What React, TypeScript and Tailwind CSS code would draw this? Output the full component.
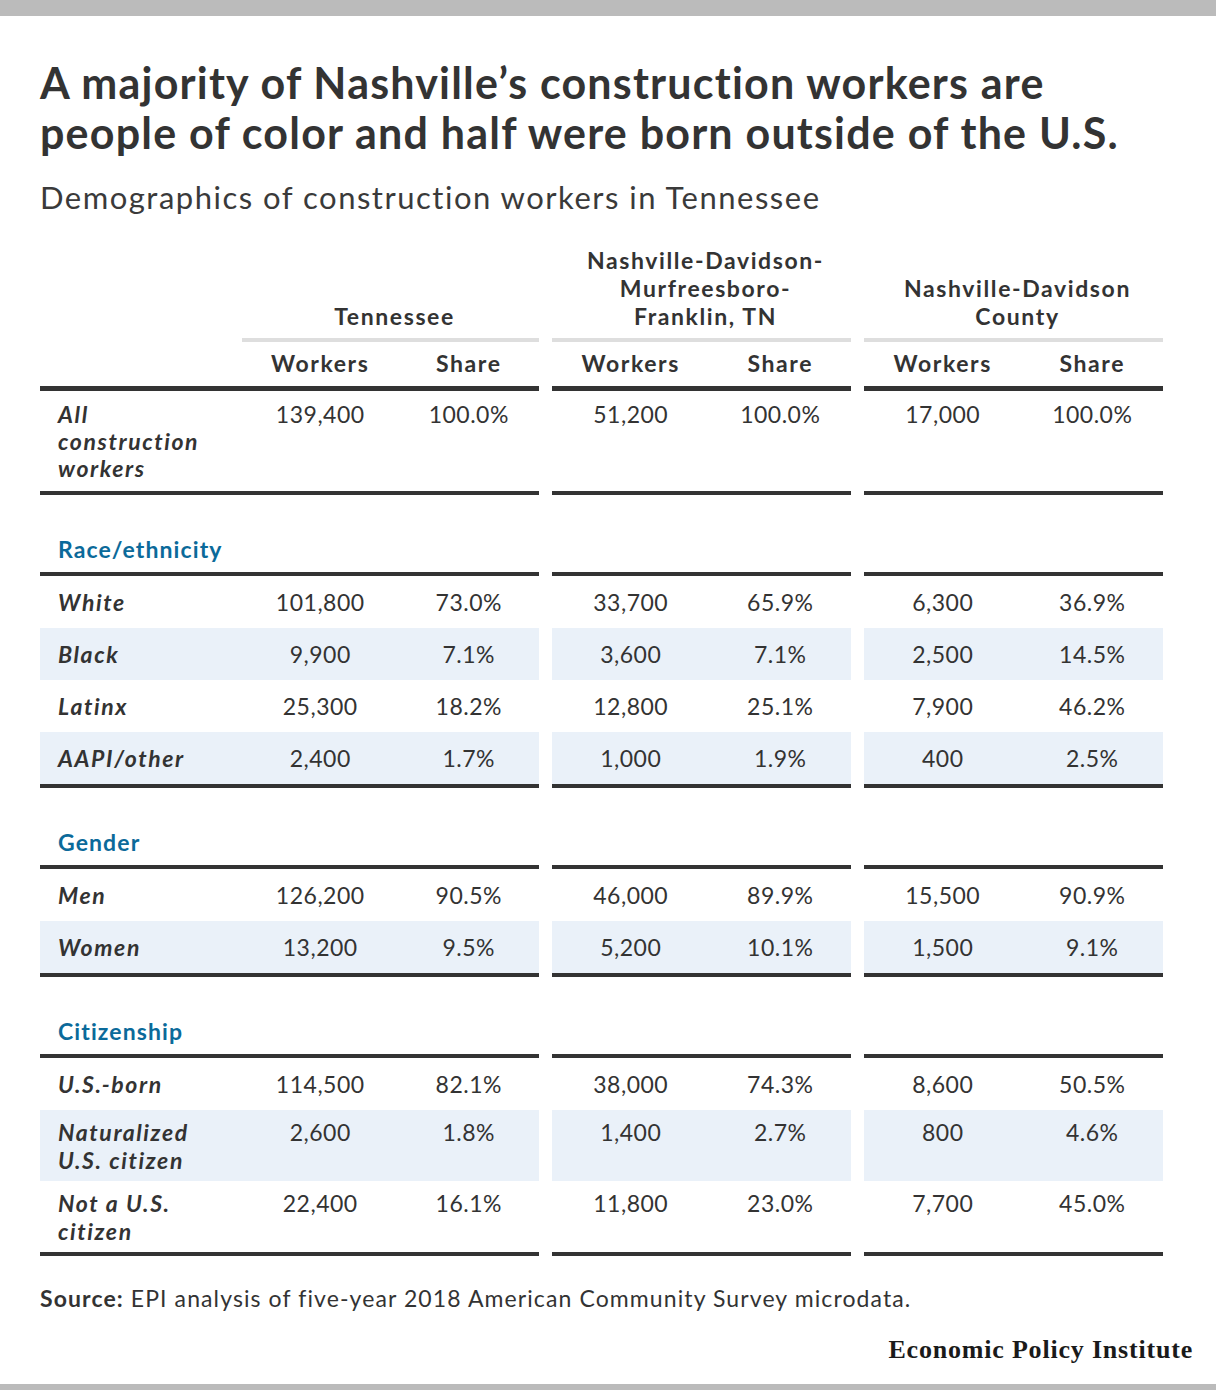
import React from "react";

type RowData = {
  label: string;
  values: string[];
  shaded?: boolean;
  pad?: string;
  last?: boolean;
};

const sections: { title: string; rows: RowData[] }[] = [
  {
    title: "Race/ethnicity",
    rows: [
      { label: "White", values: ["101,800", "73.0%", "33,700", "65.9%", "6,300", "36.9%"] },
      { label: "Black", values: ["9,900", "7.1%", "3,600", "7.1%", "2,500", "14.5%"], shaded: true },
      { label: "Latinx", values: ["25,300", "18.2%", "12,800", "25.1%", "7,900", "46.2%"] },
      { label: "AAPI/other", values: ["2,400", "1.7%", "1,000", "1.9%", "400", "2.5%"], shaded: true, last: true },
    ],
  },
  {
    title: "Gender",
    rows: [
      { label: "Men", values: ["126,200", "90.5%", "46,000", "89.9%", "15,500", "90.9%"] },
      { label: "Women", values: ["13,200", "9.5%", "5,200", "10.1%", "1,500", "9.1%"], shaded: true, last: true },
    ],
  },
  {
    title: "Citizenship",
    rows: [
      { label: "U.S.-born", values: ["114,500", "82.1%", "38,000", "74.3%", "8,600", "50.5%"] },
      {
        label: "Naturalized U.S. citizen",
        values: ["2,600", "1.8%", "1,400", "2.7%", "800", "4.6%"],
        shaded: true,
        pad: "pt-[8px] pb-[7px]",
      },
      {
        label: "Not a U.S. citizen",
        values: ["22,400", "16.1%", "11,800", "23.0%", "7,700", "45.0%"],
        pad: "pt-[8px] pb-[7px]",
        last: true,
      },
    ],
  },
];

const Cell = ({ children }: { children: React.ReactNode }) => (
  <div className="flex-1 pl-2 text-center">{children}</div>
);

const DataRow = ({ label, values, shaded, pad = "py-[12px]", last }: RowData) => {
  const seg = `flex ${pad} ${shaded ? "bg-[#eaf1f9]" : ""} ${last ? "border-b-4 border-[#333333]" : ""}`;
  return (
    <div className="flex gap-[13px] text-[23px] tracking-[0.5px] text-[#333333]">
      <div className={`${seg} w-[499px]`}>
        <div className="w-[202px] pl-[18px] pr-[22px] text-[23px] font-bold italic tracking-[1.6px]">{label}</div>
        <Cell>{values[0]}</Cell>
        <Cell>{values[1]}</Cell>
      </div>
      <div className={`${seg} w-[299px]`}>
        <Cell>{values[2]}</Cell>
        <Cell>{values[3]}</Cell>
      </div>
      <div className={`${seg} w-[299px]`}>
        <Cell>{values[4]}</Cell>
        <Cell>{values[5]}</Cell>
      </div>
    </div>
  );
};

const SectionHeader = ({ title }: { title: string }) => (
  <div className="flex gap-[13px] text-[23px] leading-[28px] tracking-[1.1px]">
    <div className="w-[499px] border-b-4 border-[#333333] pt-[40px] pb-[9px] pl-[18px] font-bold text-[#0b6a9a]">
      {title}
    </div>
    <div className="w-[299px] border-b-4 border-[#333333]" />
    <div className="w-[299px] border-b-4 border-[#333333]" />
  </div>
);

export default function App() {
  return (
    <div
      className="flex h-[1390px] w-[1216px] flex-col bg-white text-[#333333]"
      style={{ fontFamily: "Lato, 'Open Sans', sans-serif" }}
    >
      <div className="h-4 bg-[#bbbbbb]" />

      <h1 className="mt-[42px] pl-10 text-[43px] font-bold leading-[50px] tracking-[1.2px] text-[#333333]">
        A majority of Nashville’s construction workers are
        <br />
        people of color and half were born outside of the U.S.
      </h1>
      <p className="mt-[21px] pl-10 text-[31px] leading-[36px] tracking-[1.5px] text-[#3a3a3a]">
        Demographics of construction workers in Tennessee
      </p>

      <div className="mt-[31px] pl-10">
        {/* group headings */}
        <div className="flex items-end gap-[13px] text-[23px] font-bold leading-[28px] tracking-[1.6px]">
          <div className="flex w-[499px] items-end">
            <div className="w-[202px]" />
            <div className="flex-1 border-b-4 border-[#dedede] pb-2 pl-2 text-center">Tennessee</div>
          </div>
          <div className="w-[299px] border-b-4 border-[#dedede] pb-2 pl-2 text-center">
            Nashville-Davidson-
            <br />
            Murfreesboro-
            <br />
            Franklin, TN
          </div>
          <div className="w-[299px] border-b-4 border-[#dedede] pb-2 pl-2 text-center">
            Nashville-Davidson
            <br />
            County
          </div>
        </div>

        {/* column headings */}
        <div className="flex gap-[13px] text-[23px] font-bold leading-[28px] tracking-[1.6px]">
          <div className="flex w-[499px] border-b-[5px] border-[#333333] pt-[7px] pb-[9px]">
            <div className="w-[202px]" />
            <Cell>Workers</Cell>
            <Cell>Share</Cell>
          </div>
          <div className="flex w-[299px] border-b-[5px] border-[#333333] pt-[7px] pb-[9px]">
            <Cell>Workers</Cell>
            <Cell>Share</Cell>
          </div>
          <div className="flex w-[299px] border-b-[5px] border-[#333333] pt-[7px] pb-[9px]">
            <Cell>Workers</Cell>
            <Cell>Share</Cell>
          </div>
        </div>

        <div className="leading-[27px]">
          <DataRow
            label="All construction workers"
            values={["139,400", "100.0%", "51,200", "100.0%", "17,000", "100.0%"]}
            pad="pt-[10px] pb-[9px]"
            last
          />
        </div>

        {sections.map((s) => (
          <div key={s.title} className="leading-[28px]">
            <SectionHeader title={s.title} />
            {s.rows.map((r) => (
              <DataRow key={r.label} {...r} />
            ))}
          </div>
        ))}
      </div>

      <p className="mt-[28px] pl-10 text-[23px] leading-[28px] tracking-[1.1px] text-[#333333]">
        <span className="font-bold">Source:</span> EPI analysis of five-year 2018 American Community Survey microdata.
      </p>

      <div
        className="mt-[23px] pr-[23px] text-right text-[26px] font-bold leading-[30px] tracking-[0.8px] text-[#1a1a1a]"
        style={{ fontFamily: "'Liberation Serif', 'DejaVu Serif', serif" }}
      >
        Economic Policy Institute
      </div>

      <div className="mt-auto h-[6px] bg-[#bbbbbb]" />
    </div>
  );
}
